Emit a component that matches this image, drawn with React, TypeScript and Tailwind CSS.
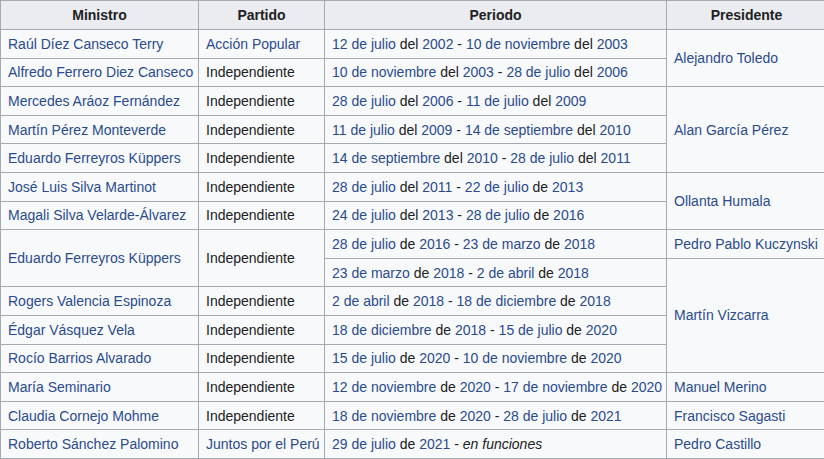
import React from "react";

type Seg = { t: string; l?: boolean; i?: boolean };

const L = (t: string): Seg => ({ t, l: true });
const T = (t: string): Seg => ({ t });

function d(a: string, c1: string, y1: string, b: string, c2: string, y2: string): Seg[] {
  return [L(a), T(` ${c1} `), L(y1), T(" - "), L(b), T(` ${c2} `), L(y2)];
}

type Row = {
  m?: { t: string; rs?: number };
  p?: { t: string; link?: boolean; rs?: number };
  per: Seg[];
  pres?: { t: string; rs?: number };
};

const rows: Row[] = [
  { m: { t: "Raúl Díez Canseco Terry" }, p: { t: "Acción Popular", link: true }, per: d("12 de julio", "del", "2002", "10 de noviembre", "del", "2003"), pres: { t: "Alejandro Toledo", rs: 2 } },
  { m: { t: "Alfredo Ferrero Diez Canseco" }, p: { t: "Independiente" }, per: d("10 de noviembre", "del", "2003", "28 de julio", "del", "2006") },
  { m: { t: "Mercedes Aráoz Fernández" }, p: { t: "Independiente" }, per: d("28 de julio", "del", "2006", "11 de julio", "del", "2009"), pres: { t: "Alan García Pérez", rs: 3 } },
  { m: { t: "Martín Pérez Monteverde" }, p: { t: "Independiente" }, per: d("11 de julio", "del", "2009", "14 de septiembre", "del", "2010") },
  { m: { t: "Eduardo Ferreyros Küppers" }, p: { t: "Independiente" }, per: d("14 de septiembre", "del", "2010", "28 de julio", "del", "2011") },
  { m: { t: "José Luis Silva Martinot" }, p: { t: "Independiente" }, per: d("28 de julio", "del", "2011", "22 de julio", "de", "2013"), pres: { t: "Ollanta Humala", rs: 2 } },
  { m: { t: "Magali Silva Velarde-Álvarez" }, p: { t: "Independiente" }, per: d("24 de julio", "del", "2013", "28 de julio", "de", "2016") },
  { m: { t: "Eduardo Ferreyros Küppers", rs: 2 }, p: { t: "Independiente", rs: 2 }, per: d("28 de julio", "de", "2016", "23 de marzo", "de", "2018"), pres: { t: "Pedro Pablo Kuczynski" } },
  { per: d("23 de marzo", "de", "2018", "2 de abril", "de", "2018"), pres: { t: "Martín Vizcarra", rs: 4 } },
  { m: { t: "Rogers Valencia Espinoza" }, p: { t: "Independiente" }, per: d("2 de abril", "de", "2018", "18 de diciembre", "de", "2018") },
  { m: { t: "Édgar Vásquez Vela" }, p: { t: "Independiente" }, per: d("18 de diciembre", "de", "2018", "15 de julio", "de", "2020") },
  { m: { t: "Rocío Barrios Alvarado" }, p: { t: "Independiente" }, per: d("15 de julio", "de", "2020", "10 de noviembre", "de", "2020") },
  { m: { t: "María Seminario" }, p: { t: "Independiente" }, per: d("12 de noviembre", "de", "2020", "17 de noviembre", "de", "2020"), pres: { t: "Manuel Merino" } },
  { m: { t: "Claudia Cornejo Mohme" }, p: { t: "Independiente" }, per: d("18 de noviembre", "de", "2020", "28 de julio", "de", "2021"), pres: { t: "Francisco Sagasti" } },
  { m: { t: "Roberto Sánchez Palomino" }, p: { t: "Juntos por el Perú", link: true }, per: [L("29 de julio"), T(" de "), L("2021"), T(" - "), { t: "en funciones", i: true }], pres: { t: "Pedro Castillo" } },
];

const td = "border border-[#a2a9b1] px-[7px] py-0 align-middle whitespace-nowrap";
const th = "border border-[#a2a9b1] px-[7px] py-0 text-center font-bold bg-[#eaecf0] text-[#202122]";
const link = "text-[#2a4b8d]";

export default function App() {
  return (
    <div className="w-[824px] h-[459px] overflow-hidden bg-white">
      <table
        className="w-[826px] table-fixed border-collapse bg-[#f8f9fa] text-[14px] text-[#202122] leading-[20px]"
        style={{ fontFamily: '"Liberation Sans", Arial, sans-serif' }}
      >
        <colgroup>
          <col className="w-[198px]" />
          <col className="w-[126px]" />
          <col className="w-[342px]" />
          <col className="w-[160px]" />
        </colgroup>
        <thead>
          <tr className="h-[29px]">
            <th className={th}>Ministro</th>
            <th className={th}>Partido</th>
            <th className={th}>Periodo</th>
            <th className={th}>Presidente</th>
          </tr>
        </thead>
        <tbody>
          {rows.map((r, i) => (
            <tr key={i} className="h-[28.6px]">
              {r.m && (
                <td className={td} rowSpan={r.m.rs}>
                  <span className={link}>{r.m.t}</span>
                </td>
              )}
              {r.p && (
                <td className={td} rowSpan={r.p.rs}>
                  {r.p.link ? <span className={link}>{r.p.t}</span> : r.p.t}
                </td>
              )}
              <td className={td}>
                {r.per.map((s, j) =>
                  s.l ? (
                    <span key={j} className={link}>{s.t}</span>
                  ) : s.i ? (
                    <i key={j}>{s.t}</i>
                  ) : (
                    <span key={j}>{s.t}</span>
                  )
                )}
              </td>
              {r.pres && (
                <td className={td} rowSpan={r.pres.rs}>
                  <span className={link}>{r.pres.t}</span>
                </td>
              )}
            </tr>
          ))}
        </tbody>
      </table>
    </div>
  );
}
